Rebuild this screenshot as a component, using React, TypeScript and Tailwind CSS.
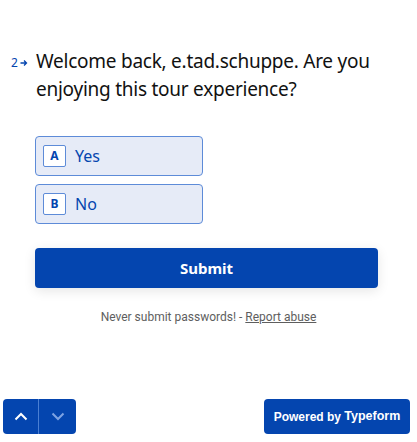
import React from "react";

const heading = { fontFamily: '"Noto Sans", "Open Sans", sans-serif' };

function Choice({ k, label }: { k: string; label: string }) {
  return (
    <div className="flex items-center h-[40px] w-[168px] rounded-[4px] border border-[#5d8bd8] bg-[#e6ebf7] pl-[7px]">
      <div className="flex items-center justify-center w-[23px] h-[22px] rounded-[2px] border border-[#5d8bd8] bg-white text-[12px] font-bold text-[#0445af]" style={heading}>
        {k}
      </div>
      <span className="ml-[9px] text-[16px] text-[#0445af]" style={heading}>{label}</span>
    </div>
  );
}

export default function App() {
  return (
    <div className="relative w-[417px] h-[442px] bg-white overflow-hidden">
      <div className="pt-[47px] pl-[11px] flex">
        <div className="w-[25px] flex items-start pt-[7px] text-[12px] text-[#0445af]" style={heading}>
          <span>2</span>
          <svg width="8" height="8" viewBox="0 0 8 8" className="ml-[2px] mt-[5px]">
            <path d="M0.5 4H6.5M4 1.5L6.5 4L4 6.5" stroke="#0445af" strokeWidth="1.3" fill="none" />
          </svg>
        </div>
        <div className="text-[19px] tracking-[-0.25px] leading-[28px] text-[#111] w-[350px]" style={heading}>
          Welcome back, e.tad.schuppe. Are you enjoying this tour experience?
        </div>
      </div>
      <div className="ml-[35px] mt-[33px] flex flex-col gap-[8px]">
        <Choice k="A" label="Yes" />
        <Choice k="B" label="No" />
      </div>
      <div className="ml-[35px] mt-[24px] w-[343px] h-[40px] rounded-[4px] bg-[#0445af] shadow-[0_3px_12px_0_rgba(0,0,0,0.1)] flex items-center justify-center text-white text-[15px] font-bold" style={heading}>
        Submit
      </div>
      <div className="mt-[20px] text-center text-[12px] text-[#5e5e5e]" style={{ fontFamily: "Roboto, sans-serif" }}>
        Never submit passwords! - <span className="underline">Report abuse</span>
      </div>
      <div className="absolute left-[3px] top-[399px] flex h-[35px] rounded-[4px] overflow-hidden bg-[#0445af]">
        <div className="w-[36px] flex items-center justify-center border-r border-[#4a7fd3]">
          <svg width="14" height="9" viewBox="0 0 14 9">
            <path d="M1.5 7.5L7 2L12.5 7.5" stroke="white" strokeWidth="2" fill="none" />
          </svg>
        </div>
        <div className="w-[37px] flex items-center justify-center">
          <svg width="14" height="9" viewBox="0 0 14 9">
            <path d="M1.5 1.5L7 7L12.5 1.5" stroke="#7ea3e3" strokeWidth="2" fill="none" />
          </svg>
        </div>
      </div>
      <div className="absolute left-[264px] top-[399px] w-[146px] h-[35px] rounded-[4px] bg-[#0445af] flex items-center justify-center text-white text-[12px]" style={{ fontFamily: '"Liberation Sans", Arial, sans-serif' }}>
        <span className="font-bold">Powered by&nbsp;</span><span className="font-bold text-[12.5px]">Typeform</span>
      </div>
    </div>
  );
}
